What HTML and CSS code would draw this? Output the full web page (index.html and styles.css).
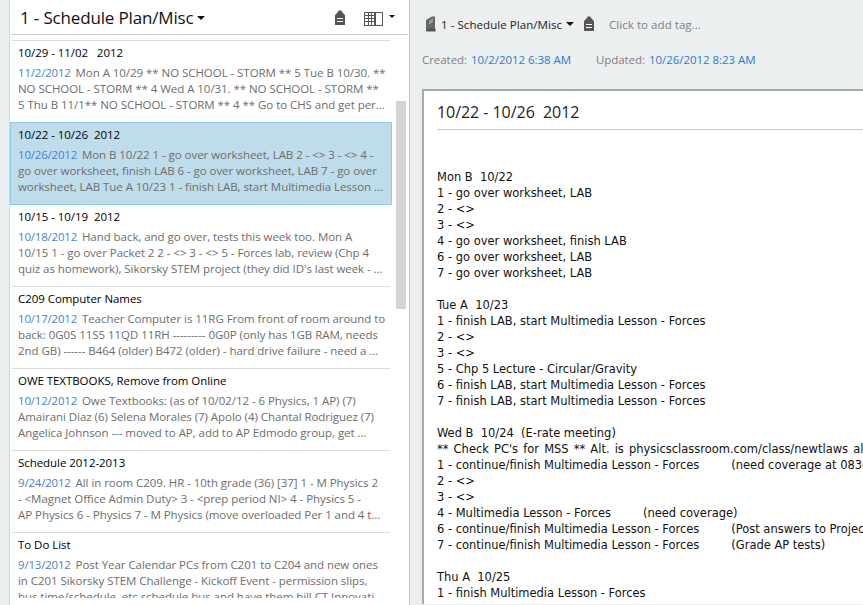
FILE: index.html
```html
<!doctype html>
<html lang="en">
  <head>
    <meta charset="utf-8">
    <title>1 - Schedule Plan/Misc</title>
    <link rel="stylesheet" href="styles.css">
  </head>
  <body>
    <div class="list-pane">
      <div class="list-head">
        <span class="list-title">1 - Schedule Plan/Misc</span>
        <span class="caret caret-title"></span>
        <svg class="tag-icon head-tag" width="12" height="16" viewBox="0 0 12 16"><path d="M4 2 L4.5 .5 H7.5 L8 2 L11 5 V15 H1 V5 Z" fill="#555"/><rect x="3" y="8" width="6" height="1" fill="#fff"/><rect x="3" y="11" width="6" height="1" fill="#fff"/></svg>
        <svg class="view-icon" width="19" height="14" viewBox="0 0 19 14"><rect x=".5" y=".5" width="18" height="13" fill="#fff" stroke="#555"/><path d="M1 3.5 H10 M1 6.5 H10 M1 9.5 H10 M4.5 1 V13 M7.5 1 V13" stroke="#555" fill="none"/><rect x="10" y="1" width="2" height="12" fill="#555"/></svg>
        <span class="caret caret-view"></span>
      </div>

      <div class="note-list">
        <div class="note-row first-row">
          <div class="row-title">10/29 - 11/02 &nbsp; 2012</div>
          <div class="row-line"><span class="row-date">11/2/2012</span>&nbsp; Mon A 10/29 ** NO SCHOOL - STORM ** 5 Tue B 10/30. **</div>
          <div class="row-line">NO SCHOOL - STORM ** 4 Wed A 10/31. ** NO SCHOOL - STORM **</div>
          <div class="row-line">5 Thu B 11/1** NO SCHOOL - STORM ** 4 ** Go to CHS and get per...</div>
        </div>
        <div class="note-row selected">
          <div class="row-title">10/22 - 10/26 &nbsp;2012</div>
          <div class="row-line"><span class="row-date">10/26/2012</span>&nbsp; Mon B 10/22 1 - go over worksheet, LAB 2 - &lt;&gt; 3 - &lt;&gt; 4 -</div>
          <div class="row-line">go over worksheet, finish LAB 6 - go over worksheet, LAB 7 - go over</div>
          <div class="row-line">worksheet, LAB Tue A 10/23 1 - finish LAB, start Multimedia Lesson ...</div>
        </div>
        <div class="note-row">
          <div class="row-title">10/15 - 10/19 &nbsp;2012</div>
          <div class="row-line"><span class="row-date">10/18/2012</span>&nbsp; Hand back, and go over, tests this week too. Mon A</div>
          <div class="row-line">10/15 1 - go over Packet 2 2 - &lt;&gt; 3 - &lt;&gt; 5 - Forces lab, review (Chp 4</div>
          <div class="row-line">quiz as homework), Sikorsky STEM project (they did ID's last week - ...</div>
        </div>
        <div class="note-row">
          <div class="row-title">C209 Computer Names</div>
          <div class="row-line"><span class="row-date">10/17/2012</span>&nbsp; Teacher Computer is 11RG From front of room around to</div>
          <div class="row-line">back: 0G0S 11S5 11QD 11RH --------- 0G0P (only has 1GB RAM, needs</div>
          <div class="row-line">2nd GB) ------ B464 (older) B472 (older) - hard drive failure - need a ...</div>
        </div>
        <div class="note-row">
          <div class="row-title">OWE TEXTBOOKS, Remove from Online</div>
          <div class="row-line"><span class="row-date">10/12/2012</span>&nbsp; Owe Textbooks: (as of 10/02/12 - 6 Physics, 1 AP) (7)</div>
          <div class="row-line">Amairani Diaz (6) Selena Morales (7) Apolo (4) Chantal Rodriguez (7)</div>
          <div class="row-line">Angelica Johnson --- moved to AP, add to AP Edmodo group, get ...</div>
        </div>
        <div class="note-row">
          <div class="row-title">Schedule 2012-2013</div>
          <div class="row-line"><span class="row-date">9/24/2012</span>&nbsp; All in room C209. HR - 10th grade (36) [37] 1 - M Physics 2</div>
          <div class="row-line">- &lt;Magnet Office Admin Duty&gt; 3 - &lt;prep period NI&gt; 4 - Physics 5 -</div>
          <div class="row-line">AP Physics 6 - Physics 7 - M Physics (move overloaded Per 1 and 4 t...</div>
        </div>
        <div class="note-row">
          <div class="row-title">To Do List</div>
          <div class="row-line"><span class="row-date">9/13/2012</span>&nbsp; Post Year Calendar PCs from C201 to C204 and new ones</div>
          <div class="row-line">in C201 Sikorsky STEM Challenge - Kickoff Event - permission slips,</div>
          <div class="row-line cut-line">bus time/schedule, etc schedule bus and have them bill CT Innovati</div>
        </div>
      </div>
      <div class="scroll-thumb"></div>
    </div>

    <div class="note-pane">
      <div class="note-meta">
        <svg class="book-icon" width="11" height="16" viewBox="0 0 11 16"><path d="M1 4 L7 .5 H10 V13 H2.5 C1.5 13 1 13.5 1 14 Z" fill="#666"/><path d="M1 14 C1 13 1.5 12.5 2.5 12.5 H10.5 V15.5 H2.5 C1.5 15.5 1 15 1 14 Z" fill="#555"/><path d="M4 6 L8 3 M4 8 L8 5" stroke="#ccc"/></svg>
        <span class="meta-book">1 - Schedule Plan/Misc</span>
        <span class="caret caret-book"></span>
        <svg class="tag-icon meta-tag" width="12" height="16" viewBox="0 0 12 16"><path d="M4 2 L4.5 .5 H7.5 L8 2 L11 5 V15 H1 V5 Z" fill="#555"/><rect x="3" y="8" width="6" height="1" fill="#fff"/><rect x="3" y="11" width="6" height="1" fill="#fff"/></svg>
        <span class="meta-tagtext">Click to add tag...</span>
      </div>
      <div class="note-dates">
        <span class="date-label">Created:</span><span class="date-value">10/2/2012 6:38 AM</span>
        <span class="date-label second">Updated:</span><span class="date-value">10/26/2012 8:23 AM</span>
      </div>
      <div class="note-sheet">
        <div class="sheet-title">10/22 - 10/26 &nbsp;2012</div>
        <div class="sheet-body">
<div>Mon B &nbsp;10/22</div>
<div>1 - go over worksheet, LAB</div>
<div>2 - &lt;&gt;</div>
<div>3 - &lt;&gt;</div>
<div>4 - go over worksheet, finish LAB</div>
<div>6 - go over worksheet, LAB</div>
<div>7 - go over worksheet, LAB</div>
<br>
<div>Tue A &nbsp;10/23</div>
<div>1 - finish LAB, start Multimedia Lesson - Forces</div>
<div>2 - &lt;&gt;</div>
<div>3 - &lt;&gt;</div>
<div>5 - Chp 5 Lecture - Circular/Gravity</div>
<div>6 - finish LAB, start Multimedia Lesson - Forces</div>
<div>7 - finish LAB, start Multimedia Lesson - Forces</div>
<br>
<div>Wed B &nbsp;10/24 &nbsp;(E-rate meeting)</div>
<div class="wide-line">** Check PC's for MSS ** Alt. is physicsclassroom.com/class/newtlaws all</div>
<div>1 - continue/finish Multimedia Lesson - Forces<span class="gap"></span>(need coverage at 0830)</div>
<div>2 - &lt;&gt;</div>
<div>3 - &lt;&gt;</div>
<div>4 - Multimedia Lesson - Forces<span class="gap"></span>(need coverage)</div>
<div>6 - continue/finish Multimedia Lesson - Forces<span class="gap"></span>(Post answers to Project)</div>
<div>7 - continue/finish Multimedia Lesson - Forces<span class="gap"></span>(Grade AP tests)</div>
<br>
<div>Thu A &nbsp;10/25</div>
<div>1 - finish Multimedia Lesson - Forces</div>
<div>2 - &lt;&gt;</div>
        </div>
      </div>
    </div>
  </body>
</html>
```

FILE: styles.css
```css
html, body {
  margin: 0;
  height: 100%;
}

body {
  display: flex;
  width: 863px;
  height: 605px;
  overflow: hidden;
  background-color: #eceff0;
  font-family: "Open Sans", sans-serif;
  white-space: nowrap;
}

.list-pane {
  position: relative;
  width: 399px;
  height: 605px;
  margin-left: 9px;
  overflow: hidden;
  background-color: #fff;
  border-left: 1px solid #d5d8d9;
  border-right: 1px solid #c6c9ca;
  flex-shrink: 0;
}

.list-head {
  display: flex;
  align-items: center;
  height: 34px;
  margin-left: 1px;
  margin-right: 1px;
  padding-left: 9px;
  padding-right: 13px;
  border-bottom: 1px solid #ccc;
}

.list-title {
  font-size: 17px;
  letter-spacing: -0.16px;
  color: #111;
}

.caret {
  display: inline-block;
  width: 0;
  height: 0;
  border-left: 4px solid transparent;
  border-right: 4px solid transparent;
  border-top: 4px solid #111;
}

.caret-title { margin-left: 4px; margin-top: 2px; }
.head-tag { margin-left: auto; margin-top: 2px; }
.view-icon { margin-left: 18px; margin-top: 3px; }

.caret-view {
  margin-left: 6px;
  margin-bottom: 2px;
  border-left-width: 3px;
  border-right-width: 3px;
  border-top-width: 3px;
}

.note-list {
  margin-top: 5px;
  margin-left: 2px;
  width: 378px;
  border-top: 1px solid #dcdcdc;
}

.note-row {
  height: 82px;
  padding: 4px 0 0 6px;
  box-sizing: border-box;
  border-bottom: 1px solid #dcdcdc;
  font-size: 11.5px;
  letter-spacing: -0.05px;
  line-height: 16px;
  color: #6d6d6d;
}

.first-row {
  height: 81px;
  border-bottom: 0;
}

.note-row.selected {
  height: 83px;
  margin: 0 -2px;
  padding: 4px 0 0 7px;
  width: 382px;
  background-color: #bfdceb;
  border: 1px solid #8fcbe8;
}

.row-title {
  margin-bottom: 4px;
  color: #000;
}

.row-date {
  margin-right: -1px;
  letter-spacing: -0.2px;
  color: #4b7fd0;
}

.cut-line { height: 9px; overflow: hidden; }

.scroll-thumb {
  position: absolute;
  left: 386px;
  top: 101px;
  width: 10px;
  height: 208px;
  background-color: #d4d4d4;
}

.note-pane {
  flex: 1;
  min-width: 0;
  padding-left: 12px;
}

.note-meta {
  display: flex;
  align-items: center;
  height: 48px;
  font-size: 11.5px;
  color: #222;
}

.book-icon { margin-left: 3px; }
.meta-book { margin-left: 5px; letter-spacing: 0.06px; }
.caret-book { margin-left: 4px; }
.meta-tag { margin-left: 9px; }
.meta-tagtext { margin-left: 14px; letter-spacing: 0.05px; color: #808080; }

.note-dates {
  font-size: 11.5px;
  letter-spacing: -0.05px;
  line-height: 16px;
  height: 41px;
  padding-top: 4px;
  box-sizing: border-box;
  color: #808080;
}

.date-label { margin-right: 4px; }
.date-label.second { margin-left: 22px; }
.date-value { color: #2a7bd0; }

.note-sheet {
  height: 515px;
  box-sizing: border-box;
  background-color: #fff;
  border-top: 2px solid #a9abab;
  border-left: 2px solid #a9abab;
  padding-left: 13px;
  overflow: hidden;
}

.sheet-title {
  height: 38px;
  line-height: 42px;
  font-size: 16px;
  letter-spacing: -0.05px;
  color: #222;
  border-bottom: 1px solid #ccc;
}

.sheet-body {
  padding-top: 39px;
  font-family: "DejaVu Sans", sans-serif;
  font-stretch: condensed;
  font-size: 12.75px;
  line-height: 16px;
  color: #111;
}

.wide-line { word-spacing: 1.5px; }

.gap {
  display: inline-block;
  width: 32px;
}
```
